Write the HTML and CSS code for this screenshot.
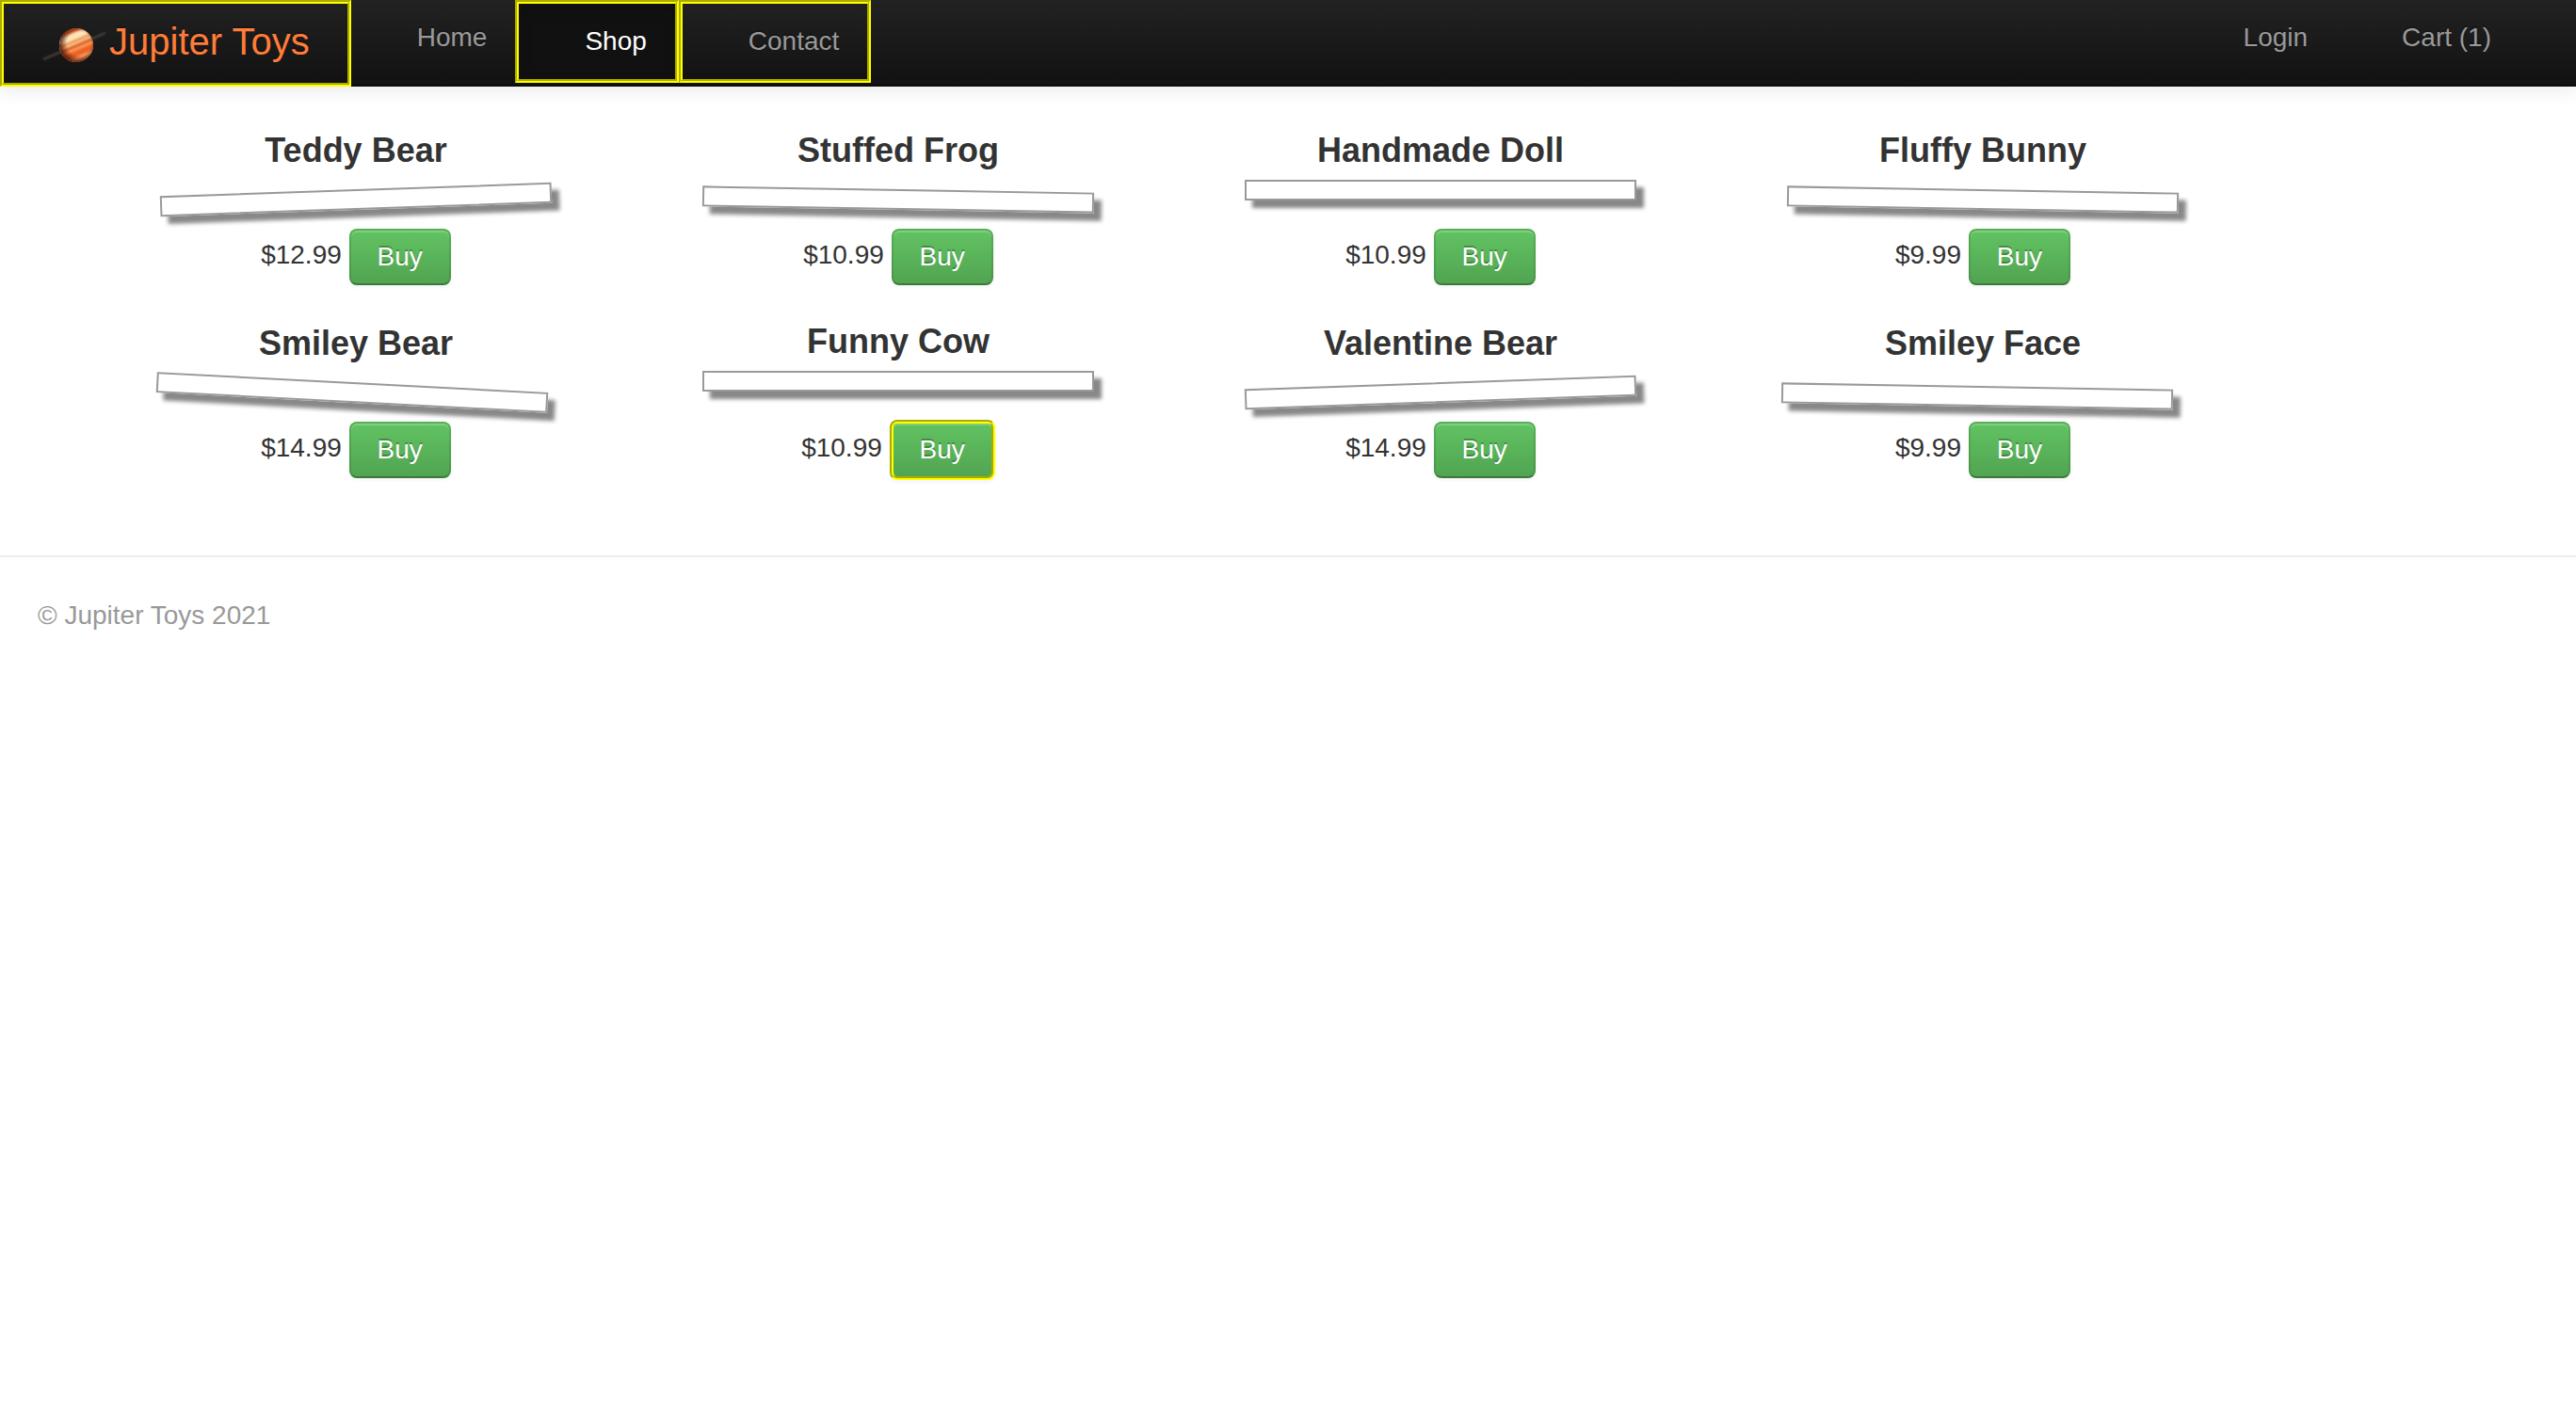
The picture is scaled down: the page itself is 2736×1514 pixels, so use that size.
FILE: index.html
```html
<!DOCTYPE html>
<html lang="en">
<head>
<meta charset="utf-8">
<meta name="viewport" content="width=device-width, initial-scale=1">
<title>Jupiter Toys</title>
<link rel="stylesheet" href="styles.css">
</head>
<body>
<header class="navbar">
  <a class="brand highlight" href="#home">
    <svg class="brand-logo" viewBox="0 0 72 40" aria-hidden="true">
      <defs>
        <radialGradient id="shade" cx="0.58" cy="0.45" r="0.58">
          <stop offset="0.6" stop-color="#4a1004" stop-opacity="0"/>
          <stop offset="1" stop-color="#4a1004" stop-opacity="0.9"/>
        </radialGradient>
        <clipPath id="disc"><circle cx="37" cy="20" r="18"/></clipPath>
        <filter id="soft"><feGaussianBlur stdDeviation="0.8"/></filter>
      </defs>
      <path d="M2 35 L68 7" stroke="#4a4640" stroke-width="2" filter="url(#soft)"/>
      <g clip-path="url(#disc)">
        <circle cx="37" cy="20" r="18" fill="#e8773a"/>
        <g transform="rotate(-23 37 20)" filter="url(#soft)">
          <rect x="17" y="2" width="40" height="4" fill="#d05a24"/>
          <rect x="17" y="7" width="40" height="7" fill="#ffe6b8"/>
          <rect x="17" y="14" width="40" height="2" fill="#e07a3c"/>
          <rect x="17" y="16" width="40" height="3" fill="#ffc080"/>
          <rect x="17" y="19" width="40" height="3" fill="#d0541c"/>
          <rect x="17" y="22" width="40" height="3" fill="#ff9a54"/>
          <rect x="17" y="25" width="40" height="7" fill="#ee6426"/>
          <rect x="17" y="32" width="40" height="3" fill="#ffb070"/>
        </g>
        <circle cx="37" cy="20" r="18" fill="url(#shade)"/>
      </g>
    </svg>
    <span>Jupiter Toys</span>
  </a>
  <nav class="nav nav-main">
    <a class="nav-link" href="#home">Home</a>
    <a class="nav-link active highlight" href="#shop">Shop</a>
    <a class="nav-link highlight" href="#contact">Contact</a>
  </nav>
  <nav class="nav nav-user">
    <a class="nav-link" href="#login">Login</a>
    <a class="nav-link" href="#cart">Cart (1)</a>
  </nav>
</header>
<main>
  <ul class="products">
    <li class="product">
      <h4 class="product-title">Teddy Bear</h4>
      <div class="photo tilt-left"></div>
      <p class="product-buy"><span>$12.99</span> <button class="btn" type="button">Buy</button></p>
    </li>
    <li class="product">
      <h4 class="product-title">Stuffed Frog</h4>
      <div class="photo tilt-right"></div>
      <p class="product-buy"><span>$10.99</span> <button class="btn" type="button">Buy</button></p>
    </li>
    <li class="product">
      <h4 class="product-title">Handmade Doll</h4>
      <div class="photo"></div>
      <p class="product-buy"><span>$10.99</span> <button class="btn" type="button">Buy</button></p>
    </li>
    <li class="product">
      <h4 class="product-title">Fluffy Bunny</h4>
      <div class="photo tilt-right"></div>
      <p class="product-buy"><span>$9.99</span> <button class="btn" type="button">Buy</button></p>
    </li>
    <li class="product">
      <h4 class="product-title">Smiley Bear</h4>
      <div class="photo tilt-steep"></div>
      <p class="product-buy"><span>$14.99</span> <button class="btn" type="button">Buy</button></p>
    </li>
    <li class="product">
      <h4 class="product-title">Funny Cow</h4>
      <div class="photo"></div>
      <p class="product-buy"><span>$10.99</span> <button class="btn highlight" type="button">Buy</button></p>
    </li>
    <li class="product">
      <h4 class="product-title">Valentine Bear</h4>
      <div class="photo tilt-left"></div>
      <p class="product-buy"><span>$14.99</span> <button class="btn" type="button">Buy</button></p>
    </li>
    <li class="product">
      <h4 class="product-title">Smiley Face</h4>
      <div class="photo tilt-low"></div>
      <p class="product-buy"><span>$9.99</span> <button class="btn" type="button">Buy</button></p>
    </li>
  </ul>
</main>
<footer class="footer">
  <p>© Jupiter Toys 2021</p>
</footer>
</body>
</html>
```

FILE: styles.css
```css
* {
  box-sizing: border-box;
}

body {
  margin: 0;
  background: #fff;
  color: #333;
  font: 28px/40px "Liberation Sans", Arial, sans-serif;
}

a {
  text-decoration: none;
}

/* Navigation bar */
.navbar {
  display: flex;
  align-items: flex-start;
  padding-right: 60px;
  background: linear-gradient(#222, #111);
  box-shadow: 0 2px 20px rgba(0, 0, 0, 0.1), inset 0 -2px 0 rgba(0, 0, 0, 0.3);
}

.brand {
  display: flex;
  align-items: flex-start;
  padding: 20px 40px;
  color: #ff7c39;
  font-size: 40px;
  white-space: nowrap;
  text-shadow: 0 -2px 0 rgba(0, 0, 0, 0.25);
}

.brand-logo {
  width: 72px;
  height: 40px;
  margin-top: 4px;
}

.nav {
  display: flex;
}

.nav-user {
  margin-left: auto;
}

.nav-link {
  padding: 20px 30px 20px 70px;
  color: #999;
  white-space: nowrap;
  text-shadow: 0 -2px 0 rgba(0, 0, 0, 0.25);
}

.nav-link.active {
  background: #111;
  color: #fff;
  box-shadow: inset 0 6px 16px rgba(0, 0, 0, 0.125);
}

.highlight,
.btn.highlight {
  border: 4px groove #ff0;
}

/* Product list */
.products {
  display: grid;
  grid-template-columns: repeat(auto-fill, 576px);
  row-gap: 40px;
  align-items: last baseline;
  margin: 0;
  padding: 48px 0 80px 90px;
  list-style: none;
  text-align: center;
}

.product-title {
  margin: 0 0 11px;
  font-size: 36px;
  line-height: 40px;
}

.photo {
  width: 416px;
  height: 22px;
  margin: 0 auto 30px;
  border: 2px solid #999;
  background: #fff;
  box-shadow: 8px 8px 4px #888;
}

.tilt-left {
  transform: translateY(10px) rotate(-2deg);
}

.tilt-right {
  transform: translateY(10px) rotate(1deg);
}

.tilt-steep {
  transform: translate(-4px, 10px) rotate(3deg);
}

.tilt-low {
  transform: translate(-6px, 14px) rotate(1deg);
}

.product-buy {
  margin: 0;
}

.btn {
  padding: 8px 28px;
  border: 2px solid;
  border-color: rgba(0, 0, 0, 0.1) rgba(0, 0, 0, 0.1) rgba(0, 0, 0, 0.25);
  border-radius: 8px;
  background: linear-gradient(#62c462, #51a351) border-box;
  box-shadow: inset 0 2px 0 rgba(255, 255, 255, 0.2), 0 2px 4px rgba(0, 0, 0, 0.05);
  color: #fff;
  font: inherit;
  text-shadow: 0 -2px 0 rgba(0, 0, 0, 0.25);
  vertical-align: middle;
  cursor: pointer;
}

/* Footer */
.footer {
  padding: 42px 40px;
  border-top: 2px solid #eee;
  color: #999;
}

.footer p {
  margin: 0;
}
```
